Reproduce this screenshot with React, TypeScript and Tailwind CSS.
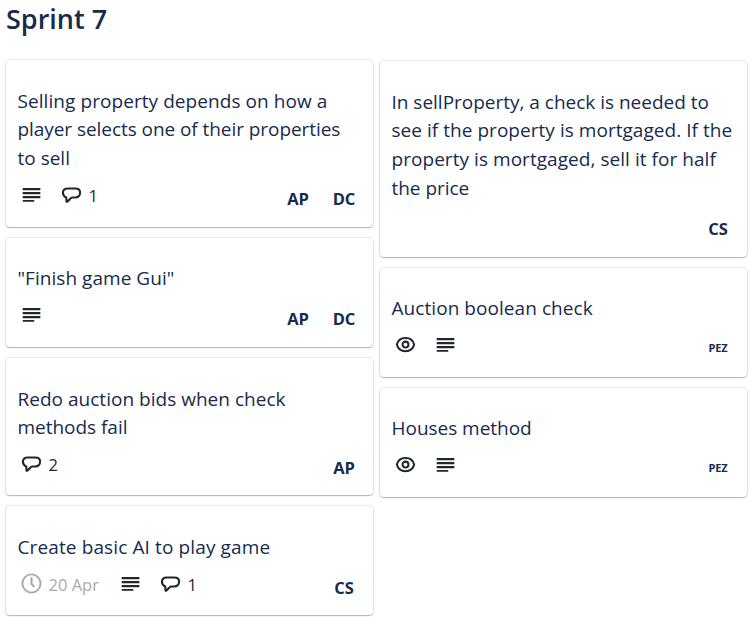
import React from 'react';

type Badge = 'watch' | 'text' | 'comment1' | 'comment2' | 'due';
type CardData = {
  lines: { text: string; cls: string }[];
  badges: Badge[];
  members: string[];
  height: string;
};

const left: CardData[] = [
  {
    lines: [
      { text: 'Selling property depends on how a', cls: 'tracking-[0.07px]' },
      { text: 'player selects one of their properties', cls: 'tracking-[-0.06px]' },
      { text: 'to sell', cls: 'tracking-[0px]' },
    ],
    badges: ['text', 'comment1'],
    members: ['AP', 'DC'],
    height: 'h-[166.5px]',
  },
  { lines: [{ text: '"Finish game Gui"', cls: 'tracking-[0.04px]' }], badges: ['text'], members: ['AP', 'DC'], height: 'h-[109.5px]' },
  {
    lines: [
      { text: 'Redo auction bids when check', cls: 'tracking-[0.02px]' },
      { text: 'methods fail', cls: 'tracking-[-0.03px]' },
    ],
    badges: ['comment2'],
    members: ['AP'],
    height: 'h-[137.2px]',
  },
  { lines: [{ text: 'Create basic AI to play game', cls: 'tracking-[0.12px]' }], badges: ['due', 'text', 'comment1'], members: ['CS'], height: 'h-[109px]' },
];

const right: CardData[] = [
  {
    lines: [
      { text: 'In sellProperty, a check is needed to', cls: 'tracking-[-0.01px]' },
      { text: 'see if the property is mortgaged. If the', cls: 'tracking-[0.04px]' },
      { text: 'property is mortgaged, sell it for half', cls: 'tracking-[0.05px]' },
      { text: 'the price', cls: 'tracking-[-0.03px]' },
    ],
    badges: [],
    members: ['CS'],
    height: 'h-[195.3px]',
  },
  { lines: [{ text: 'Auction boolean check', cls: 'tracking-[0.06px]' }], badges: ['watch', 'text'], members: ['PEZ'], height: 'h-[109px]' },
  { lines: [{ text: 'Houses method', cls: 'tracking-[-0.03px]' }], badges: ['watch', 'text'], members: ['PEZ'], height: 'h-[109px]' },
];

function TextIcon() {
  return (
    <svg className="size-[23px] shrink-0" viewBox="0 0 23 23" fill="#22272f">
      <rect x="2.7" y="4.9" width="17.7" height="2.3" rx="0.5" />
      <rect x="2.7" y="8.9" width="17.7" height="2.3" rx="0.5" />
      <rect x="2.7" y="12.9" width="17.7" height="2.3" rx="0.5" />
      <rect x="2.7" y="16.9" width="11.6" height="1.9" rx="0.5" />
    </svg>
  );
}

function CommentIcon() {
  return (
    <svg className="size-[23px] shrink-0" viewBox="0 -0.8 24 24" fill="none" stroke="#22272f" strokeWidth="2.2" strokeLinejoin="round">
      <path d="M8 4.9H16C19 4.9 21 6.6 21 9.2C21 12.4 18.8 14.3 16 14.3H12.6C10.6 14.6 9.6 17.6 7.3 18.8C6.9 18.9 6.8 18.7 6.8 18.3L6.5 14.3C4.5 13.5 3 11.4 3 9.2C3 6.6 5 4.9 8 4.9Z" />
    </svg>
  );
}

function WatchIcon() {
  return (
    <svg className="size-[23px] shrink-0" viewBox="0 0 24 24" fill="none" stroke="#22272f" strokeWidth="2.1">
      <path d="M12 5.2C16.6 5.2 20 7.8 21 12.1C20 16.4 16.6 19 12 19C7.4 19 4 16.4 3 12.1C4 7.8 7.4 5.2 12 5.2Z" strokeLinejoin="round" />
      <circle cx="12" cy="12.1" r="3.1" />
    </svg>
  );
}

function ClockIcon() {
  return (
    <svg className="size-[23px] shrink-0" viewBox="0 0 24 24" fill="none" stroke="#aaaaaa" strokeWidth="2">
      <circle cx="12" cy="12" r="9.5" />
      <path d="M12 6.4V12.4L14.3 15" strokeWidth="2.2" strokeLinecap="round" strokeLinejoin="round" />
    </svg>
  );
}

function BadgeView({ kind }: { kind: Badge }) {
  if (kind === 'text') return <TextIcon />;
  if (kind === 'watch') return <WatchIcon />;
  if (kind === 'due')
    return (
      <div className="flex items-start text-[16.5px] leading-[23px] text-[#aaaaaa]">
        <ClockIcon />
        <span className="ml-[6px] w-[53px] whitespace-nowrap pt-[1px]">20 Apr</span>
      </div>
    );
  return (
    <div className="flex items-start text-[16.5px] leading-[23px] text-[#22272f]">
      <CommentIcon />
      <span className="ml-[6px] pt-[1px]">{kind === 'comment1' ? '1' : '2'}</span>
    </div>
  );
}

function Card({ card }: { card: CardData }) {
  const noBadges = card.badges.length === 0;
  return (
    <article
      className={`${card.height} rounded-[4px] bg-white pl-[11.5px] pr-[6px] pt-[26.6px] shadow-[0_1px_1px_#091e4240,0_0_1px_1px_#091e421c]`}
    >
      <h3 className="text-[19px] leading-[28.6px] text-[#172b4d]">
        {card.lines.map((line) => (
          <span key={line.text} className={`block whitespace-nowrap ${line.cls}`}>
            {line.text}
          </span>
        ))}
      </h3>
      <div className={`flex justify-between ${noBadges ? 'mt-[11px]' : 'mt-[10px]'}`}>
        <div className="flex gap-[17px] pl-[2px]">
          {card.badges.map((b) => (
            <BadgeView key={b} kind={b} />
          ))}
        </div>
        <div className="flex">
          {card.members.map((m) => (
            <span
              key={m}
              className={`w-[46px] text-center font-bold leading-[23px] text-[#172b4d] ${m === 'PEZ' ? 'mt-[3px] text-[11px] tracking-[-0.1px]' : 'mt-[4px] text-[16.5px]'}`}
            >
              {m}
            </span>
          ))}
        </div>
      </div>
    </article>
  );
}

export default function App() {
  return (
    <main className="h-[624px] w-[754px] overflow-hidden bg-white font-['Open_Sans',sans-serif] text-[#172b4d]">
      <h1 className="pl-[6px] text-[27px] font-semibold leading-[37px]">Sprint 7</h1>
      <div className="flex items-start gap-[7px] pl-[6px]">
        <section className="flex w-[367px] flex-col gap-[11px] pt-[23.3px]">
          {left.map((c) => (
            <Card key={c.lines[0].text} card={c} />
          ))}
        </section>
        <section className="flex w-[367px] flex-col gap-[11px] pt-[24.3px]">
          {right.map((c) => (
            <Card key={c.lines[0].text} card={c} />
          ))}
        </section>
      </div>
    </main>
  );
}
